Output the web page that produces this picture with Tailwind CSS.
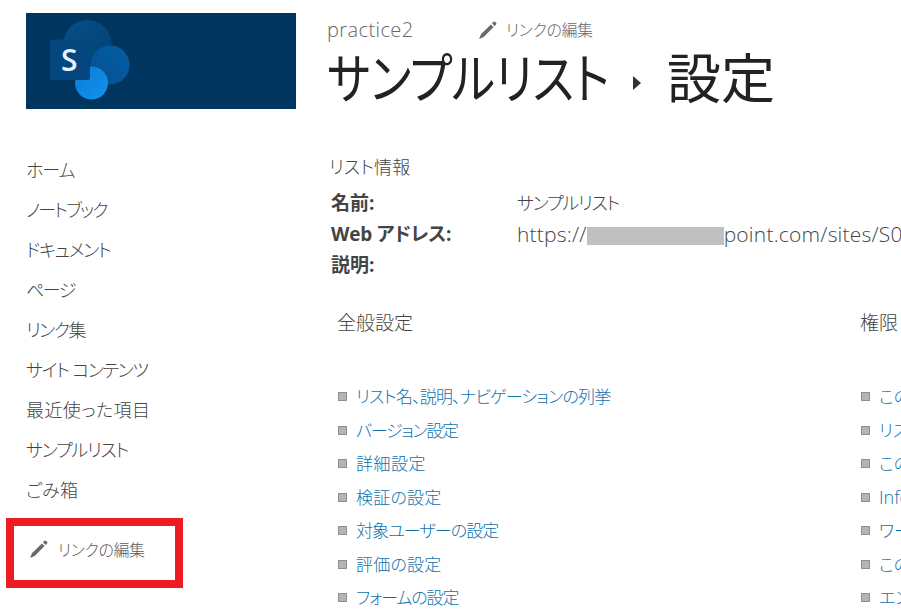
<!DOCTYPE html>
<html lang="ja">
<head>
<meta charset="utf-8">
<script src="https://cdn.jsdelivr.net/npm/@tailwindcss/browser@4"></script>
</head>
<body class="bg-white overflow-hidden">
<div class="w-[901px] h-[614px] overflow-hidden flex font-['Open_Sans','Noto_Sans_CJK_JP',sans-serif] font-light [font-feature-settings:'palt'] text-[#444]">
  <aside class="w-[327px] shrink-0 flex flex-col pt-[13px]">
    <div class="ml-[26px] w-[270px] h-[96px] bg-[#00355f] relative">
      <svg width="270" height="96" viewBox="0 0 270 96">
        <defs>
          <linearGradient id="a" x1="0" y1="0" x2="1" y2="1"><stop offset="0" stop-color="#054f8a"/><stop offset="1" stop-color="#03416f"/></linearGradient>
          <linearGradient id="b" x1="0" y1="1" x2="1" y2="0"><stop offset="0" stop-color="#03508f"/><stop offset="1" stop-color="#045ea5"/></linearGradient>
          <linearGradient id="c" x1="0" y1="0" x2="1" y2="1"><stop offset="0" stop-color="#0a7bd6"/><stop offset="1" stop-color="#1492ef"/></linearGradient>
        </defs>
        <circle cx="61.5" cy="31" r="24" fill="url(#a)"/>
        <circle cx="84" cy="52" r="19.5" fill="url(#b)"/>
        <circle cx="65.5" cy="70" r="16.5" fill="url(#c)"/>
        <rect x="24" y="26.5" width="40" height="40.5" rx="2" fill="#04477f"/>
      </svg>
      <span class="absolute left-[35px] top-[29px] text-[30px] leading-[36px] font-semibold text-[#e8f2fb]">S</span>
    </div>
    <nav class="mt-[41px] pl-[26px] flex flex-col text-[18px] leading-[40px] text-[#444]">
      <a class="tracking-[-1px]">ホーム</a>
      <a class="tracking-[-1.9px]">ノートブック</a>
      <a class="tracking-[-1.2px]">ドキュメント</a>
      <a class="tracking-[-1.5px]">ページ</a>
      <a class="tracking-[-1.5px]">リンク集</a>
      <a class="tracking-[-1.3px]">サイト コンテンツ</a>
      <a class="tracking-[0.4px]">最近使った項目</a>
      <a class="tracking-[-1.2px]">サンプルリスト</a>
      <a class="tracking-[0.3px]">ごみ箱</a>
    </nav>
    <div class="mt-[8px] ml-[6px] w-[177px] h-[70px] border-[8px] border-[#ed1c24] flex items-center pl-[15px] pb-[6px] gap-[10px] text-[16px] tracking-[-0.4px] text-[#5a5a5a]">
      <svg class="mb-[2px]" width="19" height="19" viewBox="0 0 18 18" fill="#6a6a6a"><path d="M12.2 3.2L14.8 5.8 5.4 15.2 1 17 2.8 12.6zM13.2 2.2L14.6.8Q15.4 0 16.4 1L17 1.6Q18 2.6 17.2 3.4L15.8 4.8z"/></svg>
      <span>リンクの編集</span>
    </div>
  </aside>
  <main class="flex-1 min-w-0 pt-[16px]">
    <div class="flex items-center h-[28px] leading-[28px] text-[#666]">
      <span class="text-[20px] tracking-[0.4px] w-[151px]">practice2</span>
      <svg class="mr-[9px]" width="19" height="19" viewBox="0 0 18 18" fill="#6a6a6a"><path d="M12.2 3.2L14.8 5.8 5.4 15.2 1 17 2.8 12.6zM13.2 2.2L14.6.8Q15.4 0 16.4 1L17 1.6Q18 2.6 17.2 3.4L15.8 4.8z"/></svg>
      <span class="text-[16px] tracking-[-0.4px]">リンクの編集</span>
    </div>
    <h1 class="flex items-center h-[68px] text-[54px] leading-[68px] text-[#222] font-normal whitespace-nowrap">
      <span class="w-[281px] origin-left scale-x-[0.851]">サンプルリスト</span>
      <svg class="ml-[25px] mr-[26px] mt-[10px]" width="8" height="14" viewBox="0 0 8 14" fill="#333"><path d="M0 0l8 7-8 7z"/></svg>
      <span>設定</span>
    </h1>
    <div class="mt-[40px] ml-[2px] text-[18px] leading-[30px] tracking-[0.1px] text-[#444]">リスト情報</div>
    <dl class="mt-[6px] text-[18px] leading-[31px] text-[#444]">
      <div class="flex h-[31px]"><dt class="w-[190px] shrink-0 pl-[4px] text-[19px] font-bold">名前:</dt><dd class="tracking-[-1.2px]">サンプルリスト</dd></div>
      <div class="flex h-[31px]"><dt class="w-[190px] shrink-0 pl-[4px] text-[19px] font-bold tracking-[-0.2px]">Web アドレス:</dt><dd class="flex items-center whitespace-nowrap text-[21px] tracking-[0.2px]">https://<span class="w-[137px] h-[18px] mt-[2px] bg-[#c0c0c0]"></span>point.com/sites/S01</dd></div>
      <div class="flex h-[31px]"><dt class="w-[190px] shrink-0 pl-[4px] text-[19px] font-bold">説明:</dt><dd></dd></div>
    </dl>
    <div class="flex mt-[27px] whitespace-nowrap">
      <section class="w-[533px] shrink-0 pl-[10px]">
        <h2 class="text-[19px] leading-[30px] text-[#444]">全般設定</h2>
        <ul class="mt-[42px] text-[17px] leading-[33.5px] text-[#0f72ad]">
          <li class="flex items-center gap-[9px] pl-[1px] tracking-[-0.8px]"><span class="w-[9px] h-[9px] bg-[#b4b4b4] border border-[#8f8f8f]"></span>リスト名、説明、ナビゲーションの列挙</li>
          <li class="flex items-center gap-[9px] pl-[1px] tracking-[-1.3px]"><span class="w-[9px] h-[9px] bg-[#b4b4b4] border border-[#8f8f8f]"></span>バージョン設定</li>
          <li class="flex items-center gap-[9px] pl-[1px] tracking-[0.5px]"><span class="w-[9px] h-[9px] bg-[#b4b4b4] border border-[#8f8f8f]"></span>詳細設定</li>
          <li class="flex items-center gap-[9px] pl-[1px] tracking-[0.2px]"><span class="w-[9px] h-[9px] bg-[#b4b4b4] border border-[#8f8f8f]"></span>検証の設定</li>
          <li class="flex items-center gap-[9px] pl-[1px] tracking-[-0.9px]"><span class="w-[9px] h-[9px] bg-[#b4b4b4] border border-[#8f8f8f]"></span>対象ユーザーの設定</li>
          <li class="flex items-center gap-[9px] pl-[1px] tracking-[0.2px]"><span class="w-[9px] h-[9px] bg-[#b4b4b4] border border-[#8f8f8f]"></span>評価の設定</li>
          <li class="flex items-center gap-[9px] pl-[1px] tracking-[-1.1px]"><span class="w-[9px] h-[9px] bg-[#b4b4b4] border border-[#8f8f8f]"></span>フォームの設定</li>
        </ul>
      </section>
      <section class="shrink-0">
        <h2 class="text-[19px] leading-[30px] text-[#444]">権限と管理</h2>
        <ul class="mt-[42px] text-[17px] leading-[33.5px] text-[#0f72ad]">
          <li class="flex items-center gap-[9px] pl-[1px]"><span class="w-[9px] h-[9px] bg-[#b4b4b4] border border-[#8f8f8f]"></span>このリストの削除</li>
          <li class="flex items-center gap-[9px] pl-[1px]"><span class="w-[9px] h-[9px] bg-[#b4b4b4] border border-[#8f8f8f]"></span>リストの保存</li>
          <li class="flex items-center gap-[9px] pl-[1px]"><span class="w-[9px] h-[9px] bg-[#b4b4b4] border border-[#8f8f8f]"></span>このリストの権限</li>
          <li class="flex items-center gap-[9px] pl-[1px] text-[18px]"><span class="w-[9px] h-[9px] bg-[#b4b4b4] border border-[#8f8f8f]"></span>Information</li>
          <li class="flex items-center gap-[9px] pl-[1px]"><span class="w-[9px] h-[9px] bg-[#b4b4b4] border border-[#8f8f8f]"></span>ワークフロー</li>
          <li class="flex items-center gap-[9px] pl-[1px]"><span class="w-[9px] h-[9px] bg-[#b4b4b4] border border-[#8f8f8f]"></span>このリストの</li>
          <li class="flex items-center gap-[9px] pl-[1px]"><span class="w-[9px] h-[9px] bg-[#b4b4b4] border border-[#8f8f8f]"></span>エンタープライズ</li>
        </ul>
      </section>
    </div>
  </main>
</div>
</body>
</html>
